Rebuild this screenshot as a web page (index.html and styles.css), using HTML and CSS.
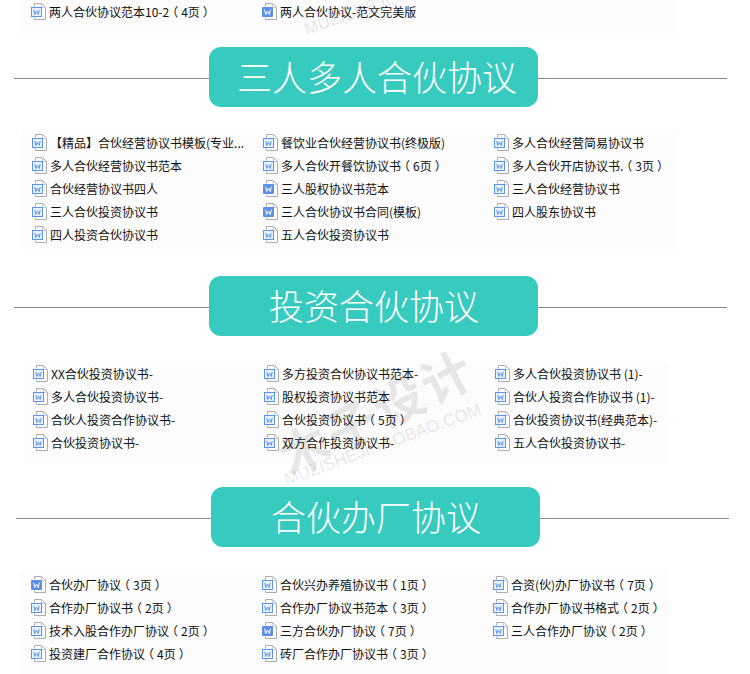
FILE: index.html
```html
<!DOCTYPE html>
<html lang="zh-CN">
<head>
<meta charset="utf-8">
<title>合伙协议</title>
<link rel="stylesheet" href="styles.css">
</head>
<body>
<svg class="defs" width="0" height="0" aria-hidden="true">
  <symbol id="doc" viewBox="0 0 15 17">
    <path d="M3.5 3.5V.5h7l4 4v12h-11v-2" fill="#fff" stroke="#a9adb3"/>
    <path d="M10.5.5v4h4" fill="none" stroke="#c9ccd0"/>
    <rect x=".5" y="4.5" width="10" height="9" fill="#eaf2ff" stroke="#5a94ee"/>
    <path d="M2.8 7l1 4.5 1.7-3.5 1.7 3.5 1-4.5" fill="none" stroke="#5a94ee"/>
  </symbol>
  <symbol id="doc-solid" viewBox="0 0 15 17">
    <path d="M3.5 3.5V.5h7l4 4v12h-11v-2" fill="#fff" stroke="#a9adb3"/>
    <path d="M10.5.5v4h4" fill="none" stroke="#c9ccd0"/>
    <rect x="0" y="4" width="11" height="10" rx="1" fill="#5b8fe8"/>
    <path d="M2.6 6.6l1.1 5 1.8-3.6 1.8 3.6 1.1-5" fill="none" stroke="#fff"/>
  </symbol>
</svg>

<main class="page">
  <ul class="panel panel-top">
    <li class="item"><svg class="ico"><use href="#doc"/></svg>两人合伙协议范本10-2<span class="pn">（</span>4页<span class="pn">）</span></li>
    <li class="item"><svg class="ico"><use href="#doc-solid"/></svg>两人合伙协议-范文完美版</li>
  </ul>

  <section class="block block-one">
    <div class="head"><h2 class="pill pill-wide">三人多人合伙协议</h2></div>
    <ul class="panel panel-one">
      <li class="item"><svg class="ico"><use href="#doc"/></svg>【精品】合伙经营协议书模板(专业...</li>
      <li class="item"><svg class="ico"><use href="#doc"/></svg>餐饮业合伙经营协议书(终极版)</li>
      <li class="item"><svg class="ico"><use href="#doc"/></svg>多人合伙经营简易协议书</li>
      <li class="item"><svg class="ico"><use href="#doc"/></svg>多人合伙经营协议书范本</li>
      <li class="item"><svg class="ico"><use href="#doc"/></svg>多人合伙开餐饮协议书<span class="pn">（</span>6页<span class="pn">）</span></li>
      <li class="item"><svg class="ico"><use href="#doc"/></svg>多人合伙开店协议书.<span class="pn">（</span>3页<span class="pn">）</span></li>
      <li class="item"><svg class="ico"><use href="#doc"/></svg>合伙经营协议书四人</li>
      <li class="item"><svg class="ico"><use href="#doc-solid"/></svg>三人股权协议书范本</li>
      <li class="item"><svg class="ico"><use href="#doc"/></svg>三人合伙经营协议书</li>
      <li class="item"><svg class="ico"><use href="#doc"/></svg>三人合伙投资协议书</li>
      <li class="item"><svg class="ico"><use href="#doc-solid"/></svg>三人合伙协议书合同(模板)</li>
      <li class="item"><svg class="ico"><use href="#doc"/></svg>四人股东协议书</li>
      <li class="item"><svg class="ico"><use href="#doc"/></svg>四人投资合伙协议书</li>
      <li class="item"><svg class="ico"><use href="#doc"/></svg>五人合伙投资协议书</li>
    </ul>
  </section>

  <section class="block block-two">
    <div class="head"><h2 class="pill">投资合伙协议</h2></div>
    <ul class="panel panel-two">
      <li class="item"><svg class="ico"><use href="#doc"/></svg>XX合伙投资协议书-</li>
      <li class="item"><svg class="ico"><use href="#doc"/></svg>多方投资合伙协议书范本-</li>
      <li class="item"><svg class="ico"><use href="#doc"/></svg>多人合伙投资协议书 (1)-</li>
      <li class="item"><svg class="ico"><use href="#doc"/></svg>多人合伙投资协议书-</li>
      <li class="item"><svg class="ico"><use href="#doc"/></svg>股权投资协议书范本</li>
      <li class="item"><svg class="ico"><use href="#doc"/></svg>合伙人投资合作协议书 (1)-</li>
      <li class="item"><svg class="ico"><use href="#doc"/></svg>合伙人投资合作协议书-</li>
      <li class="item"><svg class="ico"><use href="#doc"/></svg>合伙投资协议书<span class="pn">（</span>5页<span class="pn">）</span></li>
      <li class="item"><svg class="ico"><use href="#doc"/></svg>合伙投资协议书(经典范本)-</li>
      <li class="item"><svg class="ico"><use href="#doc"/></svg>合伙投资协议书-</li>
      <li class="item"><svg class="ico"><use href="#doc"/></svg>双方合作投资协议书-</li>
      <li class="item"><svg class="ico"><use href="#doc"/></svg>五人合伙投资协议书-</li>
    </ul>
  </section>

  <section class="block block-three">
    <div class="head head-shift"><h2 class="pill">合伙办厂协议</h2></div>
    <ul class="panel panel-three">
      <li class="item"><svg class="ico"><use href="#doc-solid"/></svg>合伙办厂协议<span class="pn">（</span>3页<span class="pn">）</span></li>
      <li class="item"><svg class="ico"><use href="#doc"/></svg>合伙兴办养殖协议书<span class="pn">（</span>1页<span class="pn">）</span></li>
      <li class="item"><svg class="ico"><use href="#doc"/></svg>合资(伙)办厂协议书<span class="pn">（</span>7页<span class="pn">）</span></li>
      <li class="item"><svg class="ico"><use href="#doc"/></svg>合作办厂协议书<span class="pn">（</span>2页<span class="pn">）</span></li>
      <li class="item"><svg class="ico"><use href="#doc"/></svg>合作办厂协议书范本<span class="pn">（</span>3页<span class="pn">）</span></li>
      <li class="item"><svg class="ico"><use href="#doc"/></svg>合作办厂协议书格式<span class="pn">（</span>2页<span class="pn">）</span></li>
      <li class="item"><svg class="ico"><use href="#doc"/></svg>技术入股合作办厂协议<span class="pn">（</span>2页<span class="pn">）</span></li>
      <li class="item"><svg class="ico"><use href="#doc-solid"/></svg>三方合伙办厂协议<span class="pn">（</span>7页<span class="pn">）</span></li>
      <li class="item"><svg class="ico"><use href="#doc"/></svg>三人合作办厂协议<span class="pn">（</span>2页<span class="pn">）</span></li>
      <li class="item"><svg class="ico"><use href="#doc"/></svg>投资建厂合作协议<span class="pn">（</span>4页<span class="pn">）</span></li>
      <li class="item"><svg class="ico"><use href="#doc"/></svg>砖厂合作办厂协议书<span class="pn">（</span>3页<span class="pn">）</span></li>
    </ul>
  </section>

  <div class="mark mark-big" aria-hidden="true">木子设计</div>
  <div class="mark mark-small" aria-hidden="true">MUZISHEJI.TAOBAO.COM</div>
  <div class="mark mark-small mark-top" aria-hidden="true">MUZISHEJI.TAOBAO.COM</div>
</main>
</body>
</html>
```

FILE: styles.css
```css
* { box-sizing: border-box; }
html, body { margin: 0; padding: 0; background: #fff; }
body {
  overflow: hidden;
  font-family: "Noto Sans CJK SC", "Noto Sans", sans-serif;
}
.defs { position: absolute; }
.page { position: relative; width: 750px; height: 674px; overflow: hidden; }

.panel {
  list-style: none;
  margin: 0;
  display: grid;
  grid-template-columns: repeat(3, 231px);
  grid-auto-rows: 23px;
  background: #fcfcfc;
}
.panel-top { margin-left: 18px; width: 660px; height: 33px; padding: 0 0 0 13px; }
.panel-one { margin: 23px 0 0 22px; width: 656px; height: 120px; padding: 1px 0 0 10px; }
.panel-two { margin: 26px 0 0 24px; width: 644px; height: 102px; padding: 0 0 0 9px; }
.panel-three { margin: 23px 0 0 20px; width: 649px; height: 104px; padding: 3px 0 0 11px; }

.item {
  display: flex;
  align-items: center;
  font-size: 12px;
  line-height: 23px;
  color: #111;
  white-space: nowrap;
}
.ico { flex: none; width: 15px; height: 17px; margin-right: 3px; }
.pn { flex: none; width: 12px; text-align: center; font-feature-settings: "halt"; }

.block-one { margin-top: 14px; }
.block-two { margin-top: 26px; }
.block-three { margin-top: 23px; }

.head {
  display: flex;
  align-items: center;
  width: 713px;
  height: 60px;
  margin-left: 14px;
}
.head-shift { margin-left: 16px; }
.head::before, .head::after {
  content: "";
  height: 1px;
  margin-top: 2px;
  background: #888;
}
.head::before { flex: none; width: 195px; }
.head::after { flex: 1; }
.pill {
  flex: none;
  width: 329px;
  height: 60px;
  margin: 0;
  padding-left: 1px;
  border-radius: 12px;
  background: #37cbc0;
  color: #fff;
  font-size: 35px;
  font-weight: 300;
  line-height: 57px;
  text-align: center;
}
.pill-wide { padding-left: 7px; }

.mark {
  position: absolute;
  white-space: nowrap;
  text-align: center;
  pointer-events: none;
}
.mark-big {
  left: 255px;
  top: 375px;
  width: 240px;
  font-size: 50px;
  line-height: 70px;
  font-weight: 700;
  letter-spacing: 3px;
  color: rgba(0, 0, 0, .085);
  transform: rotate(-27deg);
}
.mark-small {
  left: 273px;
  top: 434px;
  width: 220px;
  font-family: "Liberation Sans", sans-serif;
  font-size: 17px;
  line-height: 22px;
  color: rgba(0, 0, 0, .1);
  transform: rotate(-20deg);
}
.mark-top { left: 293px; top: -16px; }
```
